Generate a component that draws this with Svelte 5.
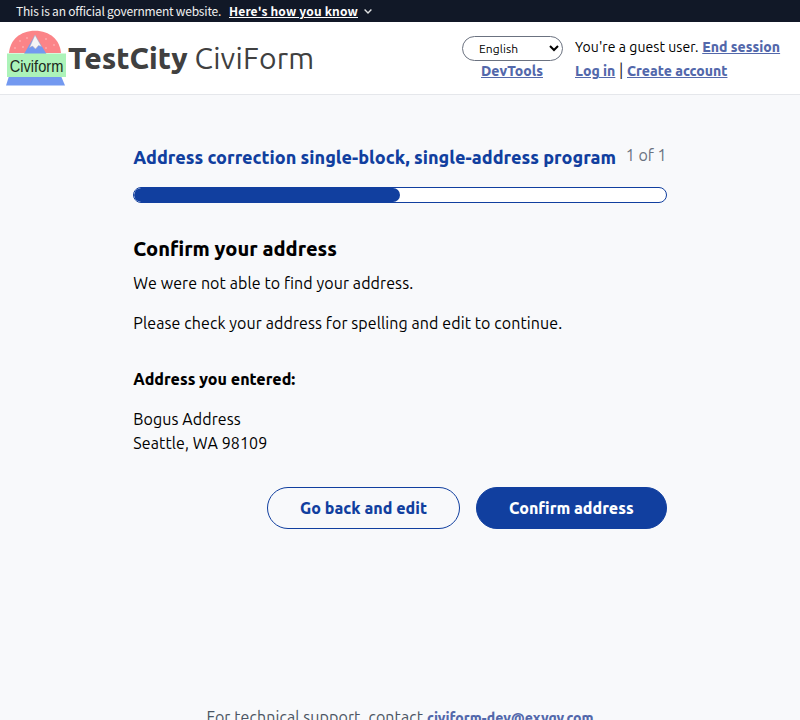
<script>
  let language = $state('English');
  const progress = 50;
</script>

<div class="page">
  <div class="banner">
    <span class="official">This is an official government website.</span>
    <button class="how">Here's how you know</button>
    <svg width="8" height="5" viewBox="0 0 8 5"><path d="M0.6 0.6 4 4 7.4 0.6" fill="none" stroke="#dfe1e2" stroke-width="1.4" /></svg>
  </div>

  <header>
    <div class="brand">
      <svg class="logo" width="68" height="64" viewBox="0 0 68 64">
        <path d="M9 27C10 14 20 4.7 35 4.7S60 14 61 27Z" fill="#fb8488" />
        <path d="M35 9 46.5 28H24Z" fill="#7399f0" />
        <path d="M35 9 41.5 20.5 38.5 19.5 35.5 23 32.5 20 29.5 21.5Z" fill="#f4f4f6" stroke="#b9a9b4" stroke-width=".5" />
        <g fill="#fdc3c6">
          <circle cx="20" cy="15" r=".8" /><circle cx="27" cy="12" r=".8" /><circle cx="15" cy="22" r=".8" />
          <circle cx="23" cy="21" r=".8" /><circle cx="46" cy="13" r=".8" /><circle cx="46" cy="22" r=".8" />
          <circle cx="54" cy="19" r=".8" />
        </g>
        <path d="M9 50H61L65 59.6H6Z" fill="#7399f0" />
        <rect x="7" y="27.5" width="59" height="23.5" fill="#acf3b9" />
        <text x="9.8" y="46" textLength="53.5" lengthAdjust="spacingAndGlyphs">Civiform</text>
      </svg>
      <div class="title"><b>TestCity</b> <span>CiviForm</span></div>
    </div>
    <div class="tools">
      <select bind:value={language} aria-label="Language"><option>English</option></select>
      <a href="#dev">DevTools</a>
    </div>
    <div class="session">
      <div><span class="guest">You're a guest user.</span> <a href="#end">End session</a></div>
      <div><a href="#login">Log in</a><span class="bar">&nbsp;|&nbsp;</span><a href="#create">Create account</a></div>
    </div>
  </header>

  <main>
    <div class="program">
      <h2>Address correction single-block, single-address program</h2>
      <span class="step">1 of 1</span>
    </div>
    <div class="track"><div class="fill" style="width: {progress}%"></div></div>
    <h1>Confirm your address</h1>
    <p>We were not able to find your address.</p>
    <p>Please check your address for spelling and edit to continue.</p>
    <h3>Address you entered:</h3>
    <address>Bogus Address<br />Seattle, WA 98109</address>
    <div class="actions">
      <button>Go back and edit</button>
      <button class="primary">Confirm address</button>
    </div>
  </main>

  <footer>For technical support, contact <a href="mailto:civiform-dev@exygy.com">civiform-dev@exygy.com</a></footer>
</div>

<style>
  :global(body) { margin: 0; overflow: hidden; }
  .page { height: 720px; overflow: hidden; display: flex; flex-direction: column; background: #f8f9fb; color: #000; font: 16px/24px Ubuntu, "Noto Sans", sans-serif; }
  .banner { height: 22px; flex: none; box-sizing: border-box; padding-left: 16px; display: flex; align-items: center; background: #111827; color: #f0f0f0; font: 12px/20px "Noto Sans CJK SC", sans-serif; white-space: nowrap; }
  .official { letter-spacing: -.2px; width: 213px; }
  .how { padding: 0; border: 0; background: none; color: #fff; font: 700 12px/20px "Noto Sans CJK SC", sans-serif; letter-spacing: .16px; text-decoration: underline; }
  .banner svg { margin-left: 6px; margin-top: 1px; }
  header { height: 73px; flex: none; box-sizing: border-box; border-bottom: 1px solid #e5e7eb; background: #fff; display: flex; }
  .brand { display: flex; align-items: center; width: 461px; }
  .logo { margin-top: -1px; flex: none; }
  .logo text { font: 16.5px/1 "Liberation Sans", sans-serif; fill: #1c2b20; }
  .title { font-size: 30px; line-height: 36px; color: #404040; white-space: nowrap; }
  .title b { font-weight: 800; }
  .title span { letter-spacing: .2px; }
  a { color: #5368ab; font-size: 14px; font-weight: 780; text-decoration: underline; letter-spacing: 0; }
  .tools { width: 102px; display: flex; flex-direction: column; align-items: center; padding-top: 14px; margin-right: 12px; }
  select { width: 101px; height: 25px; box-sizing: border-box; padding: 0 0 0 12.5px; border: 1px solid #6b7280; border-radius: 13px; background: #fff; color: #000; font: 12px Ubuntu, "Noto Sans", sans-serif; letter-spacing: .07px; }
  .tools a { line-height: 20px; }
  .session { padding-top: 12px; white-space: nowrap; }
  .session div { height: 24px; }
  .guest { font-size: 14px; letter-spacing: .07px; }
  .bar { color: #222; }
  main { width: 533.33px; margin: 51px auto 0; }
  .program { display: flex; justify-content: space-between; height: 41px; white-space: nowrap; }
  h2 { margin: 0; color: #113f9f; font-size: 18px; line-height: 22px; font-weight: 780; }
  .step { color: #6b7280; margin-top: -3px; }
  h1, h3, p { margin: 0; }
  .track { height: 16px; box-sizing: border-box; border: 1px solid #113f9f; border-radius: 8px; background: #fff; overflow: hidden; }
  .fill { height: 14px; background: #113f9f; border-radius: 8px; }
  h1 { margin-top: 32px; font-size: 20px; line-height: 28px; font-weight: 780; }
  p, address, footer { letter-spacing: .09px; font-feature-settings: "liga" 1; }
  p { margin-top: 8px; }
  p + p { margin-top: 16px; }
  h3 { margin-top: 32px; font-size: 16px; font-weight: 780; }
  address { margin-top: 16px; font-style: normal; }
  .actions { display: flex; justify-content: flex-end; gap: 16px; margin-top: 32px; }
  .actions button { box-sizing: border-box; height: 42px; padding: 0 32px; border: 1px solid #113f9f; border-radius: 21px; background: transparent; color: #113f9f; font: 780 16px/24px Ubuntu, "Noto Sans", sans-serif; }
  .actions .primary { background: #113f9f; color: #fff; }
  footer { margin-top: 176px; text-align: center; color: #4b5563; white-space: nowrap; }
</style>
